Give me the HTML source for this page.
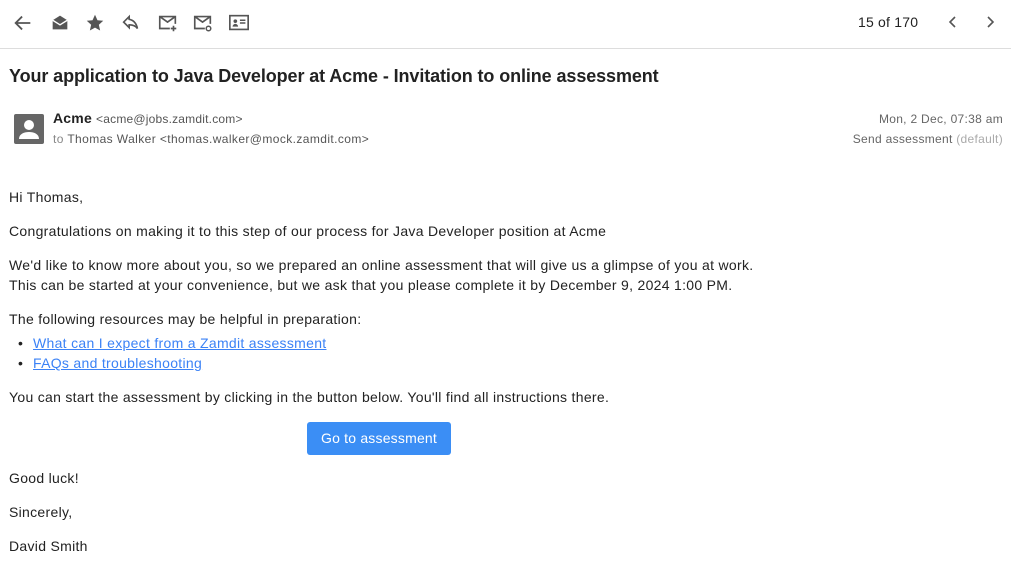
<!DOCTYPE html>
<html><head><meta charset="utf-8"><style>
*{margin:0;padding:0;box-sizing:border-box}
body{width:1011px;height:571px;overflow:hidden;background:#fff;font-family:"Liberation Sans",sans-serif;color:#222;font-size:14px;position:relative}
.a{position:absolute;white-space:nowrap}
.ic{position:absolute;top:12px}
.t{line-height:20px;letter-spacing:0.3px}
a{color:#3b82f6;text-decoration:underline}
</style></head><body>
<svg class="ic" style="left:12px" width="22" height="22" viewBox="0 0 24 24"><path d="M20 12H5M11 5l-7 7 7 7" fill="none" stroke="#555" stroke-width="2"/></svg>
<svg class="ic" style="left:49px" width="22" height="22" viewBox="0 0 24 24"><path d="M4 9l8-5 8 5v10H4z" fill="#555"/><path d="M4 9l8 5 8-5" fill="none" stroke="#fff" stroke-width="1.5"/></svg>
<svg class="ic" style="left:84px" width="22" height="22" viewBox="0 0 24 24"><path d="M12 3l2.7 6 6.3.6-4.8 4.3 1.4 6.3L12 17l-5.6 3.2 1.4-6.3L3 9.6 9.3 9z" fill="#555"/></svg>
<svg class="ic" style="left:120px" width="22" height="22" viewBox="0 0 24 24"><path d="M10 8V5l-6 6 6 6v-3c4 0 7 1 9 4-1-5-4-9-9-10z" fill="none" stroke="#555" stroke-width="1.8"/></svg>
<svg class="ic" style="left:157px" width="22" height="22" viewBox="0 0 24 24"><path d="M14 18H3V5h17v8M3 5l8.5 6L20 5M18 15v6M15 18h6" fill="none" stroke="#555" stroke-width="1.8"/></svg>
<svg class="ic" style="left:192px" width="22" height="22" viewBox="0 0 24 24"><path d="M14 18H3V5h17v8M3 5l8.5 6L20 5" fill="none" stroke="#555" stroke-width="1.8"/><circle cx="18" cy="18" r="2.5" fill="none" stroke="#555" stroke-width="1.6"/></svg>
<svg class="ic" style="left:228px" width="22" height="22" viewBox="0 0 24 24"><rect x="2" y="4" width="20" height="15" fill="none" stroke="#555" stroke-width="1.8"/><circle cx="8" cy="10" r="2" fill="#555"/><path d="M5 16c0-2 2-3 3-3s3 1 3 3z" fill="#555"/><path d="M13 9h6M13 12h6" stroke="#555" stroke-width="1.6"/></svg>
<div class="a" style="left:858px;top:14px;font-size:14px;color:#222;letter-spacing:0.2px">15 of 170</div>
<svg class="ic" style="left:945px" width="16" height="20" viewBox="0 0 16 20"><path d="M10 5l-5 5 5 5" fill="none" stroke="#555" stroke-width="1.6"/></svg>
<svg class="ic" style="left:982px" width="16" height="20" viewBox="0 0 16 20"><path d="M6 5l5 5-5 5" fill="none" stroke="#555" stroke-width="1.6"/></svg>
<div class="a" style="left:0;top:48px;width:1011px;height:1px;background:#ddd"></div>
<div class="a" style="left:9px;top:66px;font-size:18px;font-weight:bold;color:#222;letter-spacing:-0.1px">Your application to Java Developer at Acme - Invitation to online assessment</div>
<svg class="a" style="left:14px;top:114px" width="30" height="30" viewBox="0 0 30 30"><rect width="30" height="30" rx="2" fill="#666"/><circle cx="15" cy="11" r="5" fill="#fff"/><path d="M5 25c0-5 5-7 10-7s10 2 10 7z" fill="#fff"/></svg>
<div class="a" style="left:53px;top:110px;font-size:14px;letter-spacing:0.2px"><b style="color:#222">Acme</b> <span style="font-size:12px;color:#555">&lt;acme@jobs.zamdit.com&gt;</span></div>
<div class="a" style="left:53px;top:132px;font-size:12px;color:#555;letter-spacing:0.4px"><span style="color:#888">to</span> Thomas Walker &lt;thomas.walker@mock.zamdit.com&gt;</div>
<div class="a" style="right:8px;top:112px;font-size:12px;color:#666;letter-spacing:0.3px">Mon, 2 Dec, 07:38 am</div>
<div class="a" style="right:8px;top:132px;font-size:12px;color:#666;letter-spacing:0.3px">Send assessment <span style="color:#aaa">(default)</span></div>
<div class="a t" style="left:9px;top:187px">Hi Thomas,</div>
<div class="a t" style="left:9px;top:221px">Congratulations on making it to this step of our process for Java Developer position at Acme</div>
<div class="a t" style="left:9px;top:255px">We'd like to know more about you, so we prepared an online assessment that will give us a glimpse of you at work.<br>This can be started at your convenience, but we ask that you please complete it by December 9, 2024 1:00 PM.</div>
<div class="a t" style="left:9px;top:309px">The following resources may be helpful in preparation:</div>
<div class="a t" style="left:18px;top:333px">•</div>
<div class="a t" style="left:33px;top:333px"><a>What can I expect from a Zamdit assessment</a></div>
<div class="a t" style="left:18px;top:353px">•</div>
<div class="a t" style="left:33px;top:353px"><a>FAQs and troubleshooting</a></div>
<div class="a t" style="left:9px;top:387px">You can start the assessment by clicking in the button below. You'll find all instructions there.</div>
<div class="a" style="left:307px;top:422px;width:144px;height:33px;background:#3b8ef5;border-radius:3px;color:#fff;text-align:center;line-height:33px;font-size:14px;letter-spacing:0.2px">Go to assessment</div>
<div class="a t" style="left:9px;top:468px">Good luck!</div>
<div class="a t" style="left:9px;top:502px">Sincerely,</div>
<div class="a t" style="left:9px;top:536px">David Smith</div>
</body></html>
